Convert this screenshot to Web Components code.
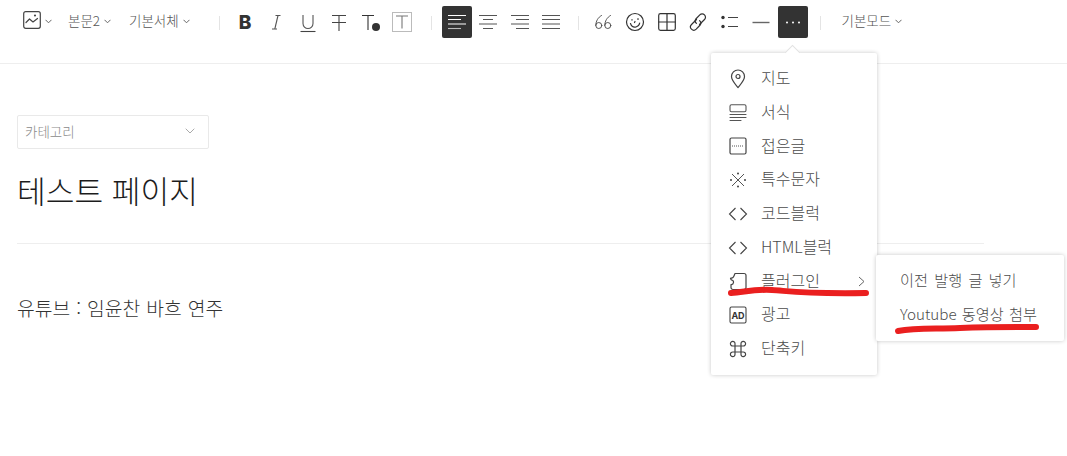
<!DOCTYPE html>
<html lang="ko"><head><meta charset="utf-8"><title>테스트 페이지</title>
<style>
html,body{margin:0;height:456px;overflow:hidden;background:#fff}
body{position:relative;font-family:"Noto Sans CJK KR","Noto Sans",sans-serif;font-weight:300;color:#333}
</style></head><body>
<tt-toolbar>
  <tt-drop style="width:41px;padding-left:6px"><tt-icon name="image" size="18"></tt-icon></tt-drop>
  <tt-drop style="width:54px;margin-left:4px;padding-left:6px">본문2</tt-drop>
  <tt-drop style="width:72px;margin-left:7px;padding-left:6px">기본서체</tt-drop>
  <tt-sep style="margin-left:24px;margin-right:9px"></tt-sep>
  <tt-btn icon="bold"></tt-btn><tt-btn icon="italic"></tt-btn><tt-btn icon="underline"></tt-btn><tt-btn icon="strike"></tt-btn><tt-btn icon="tcolor"></tt-btn><tt-btn icon="tbox"></tt-btn>
  <tt-sep style="margin-left:13px;margin-right:9px"></tt-sep>
  <tt-btn icon="left" active></tt-btn><tt-btn icon="center"></tt-btn><tt-btn icon="right"></tt-btn><tt-btn icon="justify"></tt-btn>
  <tt-sep style="margin-left:11px;margin-right:9px"></tt-sep>
  <tt-btn icon="quote"></tt-btn><tt-btn icon="emoji"></tt-btn><tt-btn icon="table"></tt-btn><tt-btn icon="link"></tt-btn><tt-btn icon="list"></tt-btn><tt-btn icon="hr"></tt-btn><tt-btn icon="more" active></tt-btn>
  <tt-sep style="margin-left:11px;margin-right:15px"></tt-sep>
  <tt-drop style="width:72px;padding-left:6px">기본모드</tt-drop>
</tt-toolbar>
<tt-editor>
  <tt-category>카테고리</tt-category>
  <tt-title>테스트 페이지</tt-title>
  <tt-body>유튜브 : 임윤찬 바흐 연주</tt-body>
</tt-editor>
<tt-menu>
  <tt-item icon="pin">지도</tt-item>
  <tt-item icon="form">서식</tt-item>
  <tt-item icon="fold">접은글</tt-item>
  <tt-item icon="special">특수문자</tt-item>
  <tt-item icon="code">코드블럭</tt-item>
  <tt-item icon="code">HTML블럭</tt-item>
  <tt-item icon="plugin" arrow>플러그인</tt-item>
  <tt-item icon="ad">광고</tt-item>
  <tt-item icon="cmd">단축키</tt-item>
</tt-menu>
<tt-submenu>
  <span style="word-spacing:2px">이전 발행 글 넣기</span>
  <span style="word-spacing:1px">Youtube 동영상 첨부</span>
</tt-submenu>
<tt-marks></tt-marks>
<script>
const S='fill="none" stroke="currentColor" stroke-width="1.2" stroke-linecap="round" stroke-linejoin="round"';
const ICONS={
image:`<g ${S}><rect x=".7" y=".7" width="16.6" height="16.6" rx="2"/><path d="M3 11.5l3.5-3.5 3.5 3 4.5-3.500"/><circle cx="12" cy="4.5" r=".5"/></g>`,
bold:`<text x="10" y="17" text-anchor="middle" font-family="Inter,'Liberation Sans',sans-serif" font-weight="800" font-size="19" fill="#333">B</text>`,
italic:`<g stroke="#555" stroke-width="1.100" fill="none"><path d="M12 3.500L8.800 17"/><path d="M9.500 3.500h5M6 17h5"/></g>`,
underline:`<g stroke="#555" stroke-width="1.100" fill="none"><path d="M5 3v8.500a5 5 0 0 0 10 0V3"/><path d="M2.500 19.500h15" stroke="#444"/></g>`,
strike:`<g stroke="#444" stroke-width="1.100" fill="none"><path d="M3 3.500h14M10 3.500V19M3 10.500h14"/></g>`,
tcolor:`<g stroke="#333" stroke-width="1.100" fill="none"><path d="M1 3.500h12M7 3.500V18"/></g><circle cx="15" cy="15" r="4" fill="#333"/>`,
tbox:`<rect x=".5" y=".5" width="19" height="19" fill="none" stroke="#bbb"/><g stroke="#777" stroke-width="1.100" fill="none"><path d="M4 4h12M10 4v12.500"/></g>`,
left:`<g stroke="#fff" stroke-width="1.100"><path d="M1 3.500h18M1 7.500h13M1 12h18"/><path d="M1 16.500h13" stroke="#bbb"/></g>`,
center:`<g stroke="#555" stroke-width="1.100"><path d="M1 3.500h18M5 7.500h10M1 12h18M5 16.500h10"/></g>`,
right:`<g stroke="#555" stroke-width="1.100"><path d="M1 3.500h18M6 7.500h13M1 12h18M6 16.500h13"/></g>`,
justify:`<g stroke="#555" stroke-width="1.100"><path d="M1 3.500h18M1 7.500h18M1 12h18M1 16.500h18"/></g>`,
quote:`<g fill="none" stroke="#444" stroke-width=".9" stroke-linecap="round"><circle cx="4.800" cy="13.500" r="3"/><path d="M1.800 13.500C1.800 9 4 5.500 7.500 3.500"/><circle cx="13.800" cy="13.500" r="3"/><path d="M10.800 13.500C10.800 9 13 5.500 16.500 3.500"/></g>`,
emoji:`<g ${S}><circle cx="10" cy="10" r="8.500"/><path d="M5.500 11.500c1 3 3.500 4 5.500 3.500s3.300-2 3.700-4"/><path d="M7 7.500v.6M13 6.500v.9M9.500 10.500l.5-1"/></g>`,
table:`<g ${S}><rect x="1.700" y="1.700" width="16.600" height="16.600" rx="1.800"/><path d="M10 1.700v16.600M1.700 10h16.600"/></g>`,
link:`<g ${S} stroke-width="1"><path d="M8.500 7.500l-5 5a3.300 3.300 0 0 0 4.700 4.700l4-4.200a3.300 3.300 0 0 0-.6-4.400"/><path d="M11.500 12.500l5-5a3.300 3.300 0 0 0-4.700-4.700l-4 4.200a3.300 3.300 0 0 0 .6 4.400"/></g>`,
list:`<circle cx="3" cy="5.500" r="1.700" fill="#333"/><circle cx="3" cy="14.500" r="1.700" fill="#333"/><path d="M8 5.500h10M8 14.500h10" stroke="#444" stroke-width="1.100"/>`,
hr:`<path d="M1.500 10.500h17" stroke="#666" stroke-width="1.400"/>`,
more:`<g fill="#fff"><circle cx="4" cy="10.500" r="1"/><circle cx="10" cy="10.500" r="1"/><circle cx="16" cy="10.500" r="1"/></g>`,
pin:`<g ${S}><path d="M10 18.500c-3.500-4.300-6.500-7.300-6.500-11a6.500 6.500 0 0 1 13 0c0 3.700-3 6.700-6.500 11z"/><circle cx="10" cy="7.500" r="2"/></g>`,
form:`<g fill="none" stroke="#555" stroke-width="1.100" stroke-linecap="round"><rect x="2" y="1.700" width="16" height="7" rx="1.500"/><path d="M2 11.500h16M2 14.500h16M2 17.500h11"/></g>`,
fold:`<g ${S}><rect x="2" y="2" width="16" height="16" rx="1.500"/></g><path d="M4 10h12" stroke="#555" stroke-width="1" stroke-dasharray="1 1"/>`,
special:`<g stroke="#555" stroke-width="1"><path d="M4 4l12 12M16 4L4 16"/></g><g fill="#444"><circle cx="10" cy="3.500" r="1"/><circle cx="10" cy="16.500" r="1"/><circle cx="3" cy="10" r="1"/><circle cx="17" cy="10" r="1"/></g>`,
code:`<g fill="none" stroke="#444" stroke-width="1.100"><path d="M7.500 4L1.500 10l6 6M12.500 4l6 6-6 6"/></g>`,
plugin:`<g ${S}><path d="M7 2.500h9a2 2 0 0 1 2 2v12a2 2 0 0 1-2 2H5a2 2 0 0 1-2-2v-3a2 2 0 0 0 .5-4.500c-.5-.5-1-1-1-1.700.5-.3 1.500 0 2.500-.8 1-.8 1.200-2.500 2-4z"/></g>`,
ad:`<rect x="2" y="2" width="16" height="16" rx="1.500" fill="none" stroke="#444" stroke-width="1.100"/><text x="10" y="13.700" text-anchor="middle" font-family="Inter,'Liberation Sans',sans-serif" font-weight="700" font-size="9" fill="#333">AD</text>`,
cmd:`<path ${S} d="M7 7h6v6H7zM7 7H5a2.300 2.300 0 1 1 2-2zM13 7V5a2.300 2.300 0 1 1 2 2zM7 13v2a2.300 2.300 0 1 1-2-2zM13 13h2a2.300 2.300 0 1 1-2 2z"/>`
};
const chev=`<svg width="7" height="5" viewBox="0 0 7 5" style="display:block"><path d="M.5 .8l3 3 3-3" fill="none" stroke="#666"/></svg>`;
function def(name,css,html){
  customElements.define(name,class extends HTMLElement{
    constructor(){super();this.attachShadow({mode:"open"});}
    connectedCallback(){
      const h=typeof html==="function"?html(this):html;
      this.shadowRoot.innerHTML=`<style>${css}</style>${h}`;
    }
  });
}
def("tt-icon",`:host{display:inline-flex;color:#444}svg{display:block}`,
  e=>{const s=e.getAttribute("size")||20;return `<svg width="${s}" height="${s}" viewBox="0 0 ${s} ${s}">${ICONS[e.getAttribute("name")]}</svg>`;});
def("tt-toolbar",`:host{display:flex;align-items:flex-start;box-sizing:border-box;height:64px;padding:6px 0 0 17px;border-bottom:1px solid #eee}`,`<slot></slot>`);
def("tt-drop",`:host{display:flex;flex:none;align-items:center;gap:4px;box-sizing:border-box;height:28px;font-size:13.5px;color:#555;white-space:nowrap}`,`<slot></slot><span style="padding-top:2px">${chev}</span>`);
def("tt-sep",`:host{display:block;flex:none;width:1px;height:14px;margin-top:10px;background:#e4e4e4}`,``);
def("tt-btn",`:host{display:flex;flex:none;justify-content:center;width:31.5px;height:32px}
div{display:flex;align-items:center;justify-content:center;width:30px;height:32px;border-radius:2px}
div.on{background:#333}svg{display:block}`,
  e=>`<div class="${e.hasAttribute("active")?"on":""}"><svg width="20" height="20" viewBox="0 0 20 20" style="overflow:visible">${ICONS[e.getAttribute("icon")]}</svg></div>`);
def("tt-editor",`:host{display:block;padding:51px 83px 0 17px}`,`<slot></slot>`);
def("tt-category",`:host{display:flex;align-items:center;justify-content:space-between;box-sizing:border-box;width:192px;height:34px;padding:0 13px 3px 7px;border:1px solid #e9e9e9;border-radius:2px;font-size:13.5px;color:#8a8a8a}`,
  `<slot></slot><svg width="10" height="6" viewBox="0 0 10 6"><path d="M.7 .7L5 5 9.300 .7" fill="none" stroke="#aaa"/></svg>`);
def("tt-title",`:host{display:block;box-sizing:border-box;height:95px;padding-top:18px;border-bottom:1px solid #eee;font-size:31.2px;line-height:46px;color:#1c1c1c}`,`<slot></slot>`);
def("tt-body",`:host{display:block;margin-top:51px;font-size:19.3px;word-spacing:.6px;line-height:26px;color:#333}`,`<slot></slot>`);
def("tt-menu",`:host{position:absolute;left:711px;top:53px;box-sizing:border-box;width:166px;height:322px;padding:9px 0;background:#fff;border-radius:2px;box-shadow:0 0 4px rgba(0,0,0,.22)}
i{position:absolute;left:76px;top:-6px;width:11px;height:11px;background:#fff;transform:rotate(45deg);border:1px solid #e2e2e2;border-right:0;border-bottom:0;box-sizing:border-box}`,`<i></i><slot></slot>`);
def("tt-item",`:host{display:flex;align-items:center;box-sizing:border-box;height:33.75px;padding-left:17px;font-size:16px;line-height:31.75px;color:#4c4c4c;position:relative}
svg{display:block;flex:none;margin-right:13px;color:#444}span{display:block;padding-bottom:2px}b{position:absolute;left:147px;top:11px}`,
  e=>`<svg width="20" height="20" viewBox="0 0 20 20">${ICONS[e.getAttribute("icon")]}</svg><span><slot></slot></span>${e.hasAttribute("arrow")?`<b><svg style="margin:0" width="7" height="11" viewBox="0 0 7 11"><path d="M1 1l5 4.500-5 4.500" fill="none" stroke="#666"/></svg></b>`:""}`);
def("tt-submenu",`:host{position:absolute;left:876px;top:255px;display:flex;flex-direction:column;box-sizing:border-box;width:188px;height:86px;padding:7px 0 0 24px;background:#fff;border-radius:2px;box-shadow:0 0 4px rgba(0,0,0,.22);font-size:15.2px;line-height:34px;color:#4c4c4c}
::slotted(span){display:block;white-space:nowrap}`,`<slot></slot>`);
def("tt-marks",`:host{position:absolute;inset:0;pointer-events:none}svg{display:block}`,
  `<svg width="1067" height="456"><g fill="none" stroke="#ea1f1f" stroke-width="6" stroke-linecap="round"><path d="M731 293C745 292 755 289 772 290S800 294 866 293"/><path d="M898 331C915 328 930 329 960 328S1015 327 1036 327"/></g></svg>`);
</script>
</body></html>
